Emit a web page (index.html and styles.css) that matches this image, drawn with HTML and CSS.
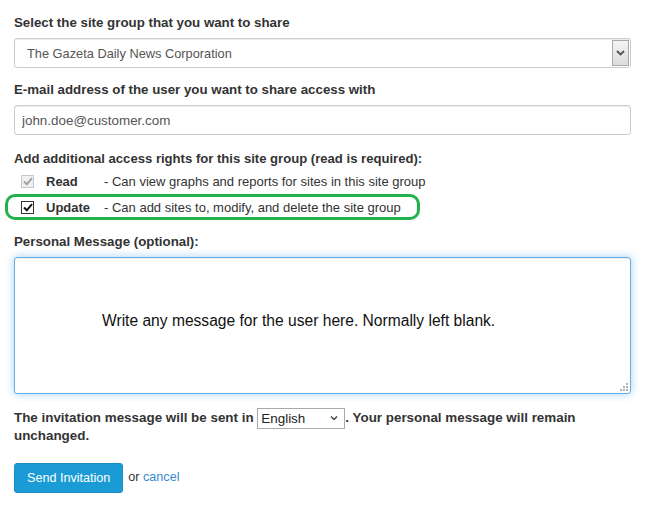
FILE: index.html
```html
<!DOCTYPE html>
<html lang="en">
<head>
  <meta charset="UTF-8">
  <title>Share site group</title>
  <link rel="stylesheet" href="styles.css">
</head>
<body>
  <form class="share-form">
    <div class="field">
      <label class="label">Select the site group that you want to share</label>
      <div class="select-box">
        <select class="select-plain">
          <option>The Gazeta Daily News Corporation</option>
        </select>
        <span class="select-arrow">
          <svg width="9" height="6" viewBox="0 0 9 6"><path d="M1 1 L4.5 4.5 L8 1" fill="none" stroke="#555" stroke-width="1.8"/></svg>
        </span>
      </div>
    </div>

    <div class="field">
      <label class="label">E-mail address of the user you want to share access with</label>
      <input type="text" class="text-input" value="john.doe@customer.com">
    </div>

    <div class="field rights">
      <p class="label-wide">Add additional access rights for this site group (read is required):</p>
      <div class="right-row">
        <span class="check disabled">
          <svg width="10" height="9" viewBox="0 0 10 9"><path d="M1 4.5 L3.8 7.3 L9 1.2" fill="none" stroke="#a0a0a0" stroke-width="2"/></svg>
        </span>
        <span class="right-name">Read</span>
        <span class="right-desc">- Can view graphs and reports for sites in this site group</span>
      </div>
      <div class="right-row highlight">
        <span class="check">
          <svg width="10" height="9" viewBox="0 0 10 9"><path d="M1 4.5 L3.8 7.3 L9 1.2" fill="none" stroke="#111" stroke-width="2"/></svg>
        </span>
        <span class="right-name">Update</span>
        <span class="right-desc">- Can add sites to, modify, and delete the site group</span>
      </div>
    </div>

    <div class="field">
      <label class="label">Personal Message (optional):</label>
      <div class="message-wrap">
        <textarea class="message" placeholder="Write any message for the user here. Normally left blank."></textarea>
        <svg class="grip" width="8" height="8" viewBox="0 0 8 8" fill="#b4b4b4">
          <rect x="6" y="0" width="2" height="2"/>
          <rect x="3" y="3" width="2" height="2"/><rect x="6" y="3" width="2" height="2"/>
          <rect x="0" y="6" width="2" height="2"/><rect x="3" y="6" width="2" height="2"/><rect x="6" y="6" width="2" height="2"/>
        </svg>
      </div>
    </div>

    <p class="lang-note">
      The invitation message will be sent in
      <span class="lang-select">
        <select class="select-plain lang"><option>English</option></select>
        <svg width="8" height="6" viewBox="0 0 8 6"><path d="M1 1.5 L4 4.5 L7 1.5" fill="none" stroke="#444" stroke-width="1.5"/></svg>
      </span>. Your personal message will remain<br>unchanged.
    </p>

    <div class="actions">
      <button type="button" class="btn">Send Invitation</button>
      <span class="or">or <a href="#">cancel</a></span>
    </div>
  </form>
</body>
</html>
```

FILE: styles.css
```css
* { margin: 0; padding: 0; box-sizing: border-box; }

body {
  font-family: "Liberation Sans", Arial, sans-serif;
  background: #fff;
  color: #333;
}

.share-form {
  width: 617px;
  margin-left: 14px;
  padding-top: 15px;
}

.field {
  margin-bottom: 14px;
}

.label {
  display: block;
  font-size: 13.3px;
  font-weight: bold;
  line-height: 16px;
  margin-bottom: 7px;
}

.select-box {
  display: flex;
  height: 30px;
  border: 1px solid #ccc;
  border-radius: 3px;
  box-shadow: inset 0 1px 1px rgba(0,0,0,0.075);
  background: #fff;
  overflow: hidden;
}

.select-plain {
  appearance: none;
  -webkit-appearance: none;
  border: none;
  background: transparent;
  font-family: inherit;
  color: #555;
  outline: none;
}

.select-box .select-plain {
  flex: 1;
  font-size: 12.8px;
  padding-left: 12px;
}

.select-arrow {
  width: 17px;
  margin: 1px 1px 1px 0;
  display: flex;
  align-items: center;
  justify-content: center;
  border: 1px solid #aaa;
  background: linear-gradient(#f4f4f4, #dcdcdc);
}

.text-input {
  width: 100%;
  height: 30px;
  border: 1px solid #ccc;
  border-radius: 3px;
  box-shadow: inset 0 1px 1px rgba(0,0,0,0.075);
  padding: 0 7px;
  font-family: inherit;
  font-size: 13.4px;
  color: #555;
}

.rights {
  margin-top: 16px;
  margin-bottom: 14px;
}

.label-wide {
  font-size: 13.1px;
  font-weight: bold;
  line-height: 16px;
  margin-bottom: 2px;
}

.right-row {
  display: flex;
  align-items: center;
  height: 24px;
  font-size: 13px;
  padding-left: 7px;
  margin-bottom: 1px;
}

.right-row.highlight {
  width: 415px;
  margin-left: -9px;
  padding-left: 13px;
  border: 3px solid #22b14c;
  border-radius: 10px;
  height: 26px;
}

.check {
  width: 13px;
  height: 13px;
  border: 1px solid #333;
  display: flex;
  align-items: center;
  justify-content: center;
  background: #fff;
}

.check.disabled {
  border-color: #c8c8c8;
  background: #f0f0f0;
}

.right-name {
  font-weight: bold;
  width: 58px;
  margin-left: 12px;
  font-size: 13px;
}

.message-wrap {
  position: relative;
}

.message {
  display: block;
  width: 100%;
  height: 137px;
  border: 1px solid #66afe9;
  border-radius: 3px;
  box-shadow: inset 0 1px 1px rgba(0,0,0,0.075), 0 0 8px rgba(102,175,233,0.6);
  padding: 54px 10px 10px 87px;
  font-family: inherit;
  font-size: 15.6px;
  outline: none;
  resize: none;
}

.message::placeholder {
  color: #111;
  opacity: 1;
}

.grip {
  position: absolute;
  right: 3px;
  bottom: 3px;
}

.lang-note {
  margin-top: 15px;
  font-size: 13.4px;
  font-weight: bold;
  line-height: 18px;
  width: 580px;
}

.lang-select {
  display: inline-flex;
  align-items: center;
  width: 88px;
  height: 21px;
  margin: -3px 0;
  border: 1px solid #a9a9a9;
  padding: 0 6px 0 3px;
  vertical-align: middle;
}

.lang-select .lang {
  flex: 1;
  font-size: 13.4px;
  color: #222;
}

.actions {
  margin-top: 18px;
  display: flex;
  align-items: center;
  gap: 5px;
}

.btn {
  height: 30px;
  padding: 0 12px;
  border: 1px solid #1a8ec7;
  border-radius: 3px;
  background: #1a9bd6;
  color: #fff;
  font-family: inherit;
  font-size: 12.6px;
}

.or {
  font-size: 12.6px;
  margin-top: -2px;
}

.or a {
  color: #3a87d2;
  text-decoration: none;
}
```
